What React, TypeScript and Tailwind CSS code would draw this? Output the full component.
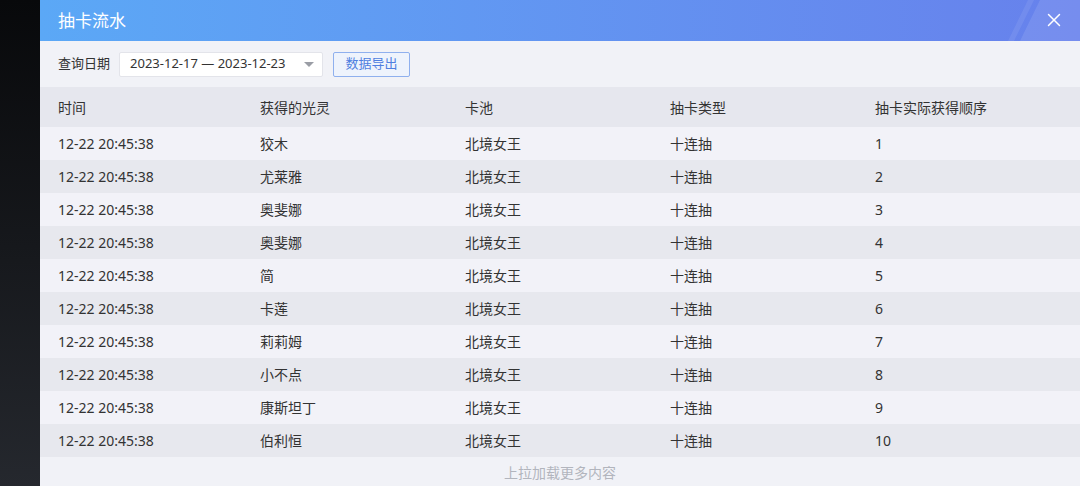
import { X } from "lucide-react";

const names = ["狡木", "尤莱雅", "奥斐娜", "奥斐娜", "简", "卡莲", "莉莉姆", "小不点", "康斯坦丁", "伯利恒"];

const rows = names.map((name, i) => ({
  time: "12-22 20:45:38",
  name,
  pool: "北境女王",
  type: "十连抽",
  order: i + 1,
}));

export default function App() {
  return (
    <div
      className="flex h-[486px] w-[1080px] overflow-hidden text-[#333]"
      style={{ fontFamily: '"Noto Sans", "Noto Sans CJK SC", sans-serif' }}
    >
      <div className="w-[40px] shrink-0 bg-gradient-to-b from-[#08090b] to-[#25282e]" />
      <div className="flex flex-1 flex-col bg-[#f1f2f7]">
        {/* title bar */}
        <div className="relative flex h-[41px] items-center bg-gradient-to-r from-[#5ba8f6] to-[#6781ec] pl-[18px]">
          <span className="text-[17px] text-white">抽卡流水</span>
          <svg className="absolute right-0 top-0" width="80" height="41" viewBox="0 0 80 41">
            <polygon points="8,41 28,0 34,0 14,41" fill="#ffffff" fillOpacity="0.08" />
            <polygon points="20,41 40,0 80,0 80,41" fill="#ffffff" fillOpacity="0.1" />
          </svg>
          <X className="absolute right-[15px] top-[9px] h-[22px] w-[22px] text-white" strokeWidth={1.6} />
        </div>

        {/* filter row */}
        <div className="flex h-[46px] items-center pl-[18px] text-[13px]">
          <span className="mr-[9px]">查询日期</span>
          <div className="flex h-[25px] w-[204px] items-center justify-between rounded-[2px] border border-[#e3e4ea] bg-white pl-[10px] pr-[8px] text-[13px]">
            <span>2023-12-17 — 2023-12-23</span>
            <span className="h-0 w-0 border-x-[5px] border-t-[5px] border-x-transparent border-t-[#9a9da5]" />
          </div>
          <button className="ml-[10px] flex h-[25px] w-[77px] items-center justify-center rounded-[2px] border border-[#8fb0ee] bg-[#eef3fc] text-[13px] text-[#4f7fe0]">
            数据导出
          </button>
        </div>

        {/* table header */}
        <div className="grid h-[40px] grid-cols-[202px_205px_205px_205px_1fr] items-center bg-[#e6e7ee] pl-[18px] text-[14px]">
          <span>时间</span>
          <span>获得的光灵</span>
          <span>卡池</span>
          <span>抽卡类型</span>
          <span>抽卡实际获得顺序</span>
        </div>

        {rows.map((r, i) => (
          <div
            key={i}
            className={`grid h-[33px] grid-cols-[202px_205px_205px_205px_1fr] items-center pl-[18px] text-[14px] ${
              i % 2 === 0 ? "bg-[#f2f2f8]" : "bg-[#e7e8ee]"
            }`}
          >
            <span>{r.time}</span>
            <span>{r.name}</span>
            <span>{r.pool}</span>
            <span>{r.type}</span>
            <span>{r.order}</span>
          </div>
        ))}

        <div className="flex flex-1 items-center justify-center pt-[2px] text-[14px] text-[#b2b5bd]">上拉加载更多内容</div>
      </div>
    </div>
  );
}
